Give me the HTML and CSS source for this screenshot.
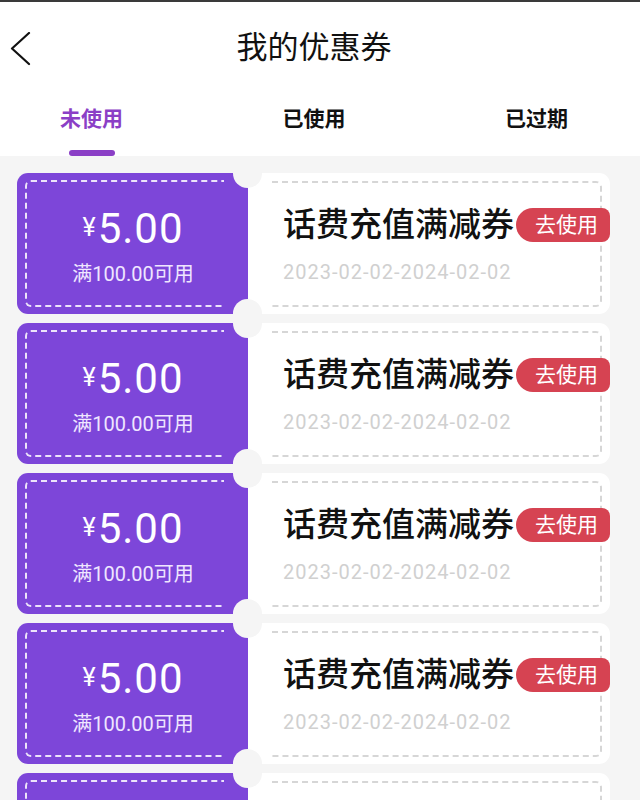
FILE: index.html
```html
<!DOCTYPE html>
<html lang="zh-CN">
<head>
    <meta charset="UTF-8">
    <title>我的优惠券</title>
    <link rel="stylesheet" href="styles.css">
</head>
<body>
<div id="page">
    <div class="nav_bar">
        <span class="nav_back">
            <svg width="22" height="34" viewBox="0 0 22 34">
                <polyline points="19,1 2,16.5 19,32" fill="none" stroke="#111" stroke-width="2.2" stroke-linecap="round" stroke-linejoin="round"/>
            </svg>
        </span>
        <h1 class="nav_title">我的优惠券</h1>
        <span></span>
    </div>

    <ul class="tabs">
        <li class="tab tab_active"><span>未使用</span><i class="tab_line"></i></li>
        <li class="tab"><span>已使用</span><i class="tab_line"></i></li>
        <li class="tab"><span>已过期</span><i class="tab_line"></i></li>
    </ul>

    <ul class="coupon_list">
        <li class="coupon">
            <div class="coupon_left">
                <div class="coupon_left_inner">
                    <p class="coupon_price"><em>¥</em>5.00</p>
                    <p class="coupon_limit">满100.00可用</p>
                </div>
            </div>
            <div class="coupon_right">
                <div class="coupon_right_inner">
                    <div class="coupon_head">
                        <h3 class="coupon_name">话费充值满减券</h3>
                        <a class="coupon_btn">去使用</a>
                    </div>
                    <p class="coupon_date">2023-02-02-2024-02-02</p>
                </div>
            </div>
        </li>
        <li class="coupon">
            <div class="coupon_left">
                <div class="coupon_left_inner">
                    <p class="coupon_price"><em>¥</em>5.00</p>
                    <p class="coupon_limit">满100.00可用</p>
                </div>
            </div>
            <div class="coupon_right">
                <div class="coupon_right_inner">
                    <div class="coupon_head">
                        <h3 class="coupon_name">话费充值满减券</h3>
                        <a class="coupon_btn">去使用</a>
                    </div>
                    <p class="coupon_date">2023-02-02-2024-02-02</p>
                </div>
            </div>
        </li>
        <li class="coupon">
            <div class="coupon_left">
                <div class="coupon_left_inner">
                    <p class="coupon_price"><em>¥</em>5.00</p>
                    <p class="coupon_limit">满100.00可用</p>
                </div>
            </div>
            <div class="coupon_right">
                <div class="coupon_right_inner">
                    <div class="coupon_head">
                        <h3 class="coupon_name">话费充值满减券</h3>
                        <a class="coupon_btn">去使用</a>
                    </div>
                    <p class="coupon_date">2023-02-02-2024-02-02</p>
                </div>
            </div>
        </li>
        <li class="coupon">
            <div class="coupon_left">
                <div class="coupon_left_inner">
                    <p class="coupon_price"><em>¥</em>5.00</p>
                    <p class="coupon_limit">满100.00可用</p>
                </div>
            </div>
            <div class="coupon_right">
                <div class="coupon_right_inner">
                    <div class="coupon_head">
                        <h3 class="coupon_name">话费充值满减券</h3>
                        <a class="coupon_btn">去使用</a>
                    </div>
                    <p class="coupon_date">2023-02-02-2024-02-02</p>
                </div>
            </div>
        </li>
        <li class="coupon">
            <div class="coupon_left">
                <div class="coupon_left_inner">
                    <p class="coupon_price"><em>¥</em>5.00</p>
                    <p class="coupon_limit">满100.00可用</p>
                </div>
            </div>
            <div class="coupon_right">
                <div class="coupon_right_inner">
                    <div class="coupon_head">
                        <h3 class="coupon_name">话费充值满减券</h3>
                        <a class="coupon_btn">去使用</a>
                    </div>
                    <p class="coupon_date">2023-02-02-2024-02-02</p>
                </div>
            </div>
        </li>
    </ul>
</div>
</body>
</html>
```

FILE: styles.css
```css
* {
    margin: 0;
    padding: 0;
    list-style: none;
    border: none;
    box-sizing: border-box;
}

body {
    font-family: Roboto, "Noto Sans CJK SC", sans-serif;
    color: #111;
    background: #f5f5f5;
}

#page {
    height: 800px;
    overflow: hidden;
}

/* 顶部导航 */
.nav_bar {
    display: grid;
    grid-template-columns: 52px 1fr 64px;
    align-items: center;
    height: 95px;
    padding-bottom: 1px;
    border-top: 2px solid #3a3a3a;
    background: #fff;
}

.nav_back {
    display: flex;
    padding-left: 10px;
    padding-top: 2px;
}

.nav_title {
    text-align: center;
    font-size: 31px;
    font-weight: 400;
    line-height: 40px;
}

/* 标签 */
.tabs {
    display: flex;
    justify-content: space-between;
    height: 61px;
    padding: 9px 72px 0 60px;
    background: #fff;
}

.tab {
    display: flex;
    flex-direction: column;
    align-items: center;
    font-size: 21px;
    font-weight: 600;
    line-height: 30px;
}

.tab_line {
    width: 46px;
    height: 6px;
    margin-top: 16px;
    border-radius: 3px;
}

.tab_active {
    color: #8b3fc6;
}

.tab_active .tab_line {
    background: #8b3fc6;
}

/* 优惠券列表 */
.coupon_list {
    display: flex;
    flex-direction: column;
    gap: 9px;
    padding: 17px 30px 0 17px;
}

.coupon {
    position: relative;
    display: flex;
    height: 141px;
    flex-shrink: 0;
}

.coupon::before, .coupon::after {
    content: "";
    position: absolute;
    left: 216px;
    width: 29px;
    height: 29px;
    border-radius: 50%;
    background: #f5f5f5;
    z-index: 2;
}

.coupon::before {
    top: -14px;
}

.coupon::after {
    bottom: -14px;
}

.coupon_left {
    display: flex;
    width: 231px;
    padding: 7px 25px 7px 8px;
    background: #7d46d9;
    border-radius: 11px 0 0 11px;
}

.coupon_left_inner {
    flex: 1;
    display: flex;
    flex-direction: column;
    justify-content: center;
    align-items: center;
    margin-right: -1px;
    padding: 4px 0 0 15px;
    border: 2px dashed rgba(255, 255, 255, 0.85);
    border-right: none;
    border-radius: 6px 0 0 6px;
    color: #fff;
}

.coupon_price {
    display: flex;
    align-items: flex-start;
    font-size: 42px;
    line-height: 48px;
    letter-spacing: 1px;
}

.coupon_price em {
    font-style: normal;
    font-size: 25px;
    line-height: 25px;
    margin: 10px 1px 0 0;
}

.coupon_limit {
    margin-top: 8px;
    font-size: 20px;
    line-height: 26px;
    color: #efe6ff;
}

.coupon_right {
    flex: 1;
    display: flex;
    padding: 8px 8px 7px 24px;
    background: #fff;
    border-radius: 0 11px 11px 0;
}

.coupon_right_inner {
    flex: 1;
    display: flex;
    flex-direction: column;
    justify-content: center;
    padding: 2px 0 0 11px;
    border: 2px dashed #d6d6d6;
    border-left: none;
    border-radius: 0 6px 6px 0;
}

.coupon_head {
    display: flex;
    align-items: center;
}

.coupon_name {
    flex-shrink: 0;
    font-size: 33px;
    font-weight: 500;
    line-height: 40px;
    white-space: nowrap;
}

.coupon_btn {
    flex-shrink: 0;
    margin-left: auto;
    margin-right: -10px;
    width: 94px;
    height: 34px;
    padding-left: 19px;
    border-radius: 17px 8px 8px 17px;
    background: #d64352;
    color: #fff;
    font-size: 21px;
    line-height: 34px;
    position: relative;
    z-index: 3;
}

.coupon_date {
    margin-top: 14px;
    font-size: 20px;
    line-height: 26px;
    letter-spacing: 1px;
    color: #d0d0d0;
}
```
